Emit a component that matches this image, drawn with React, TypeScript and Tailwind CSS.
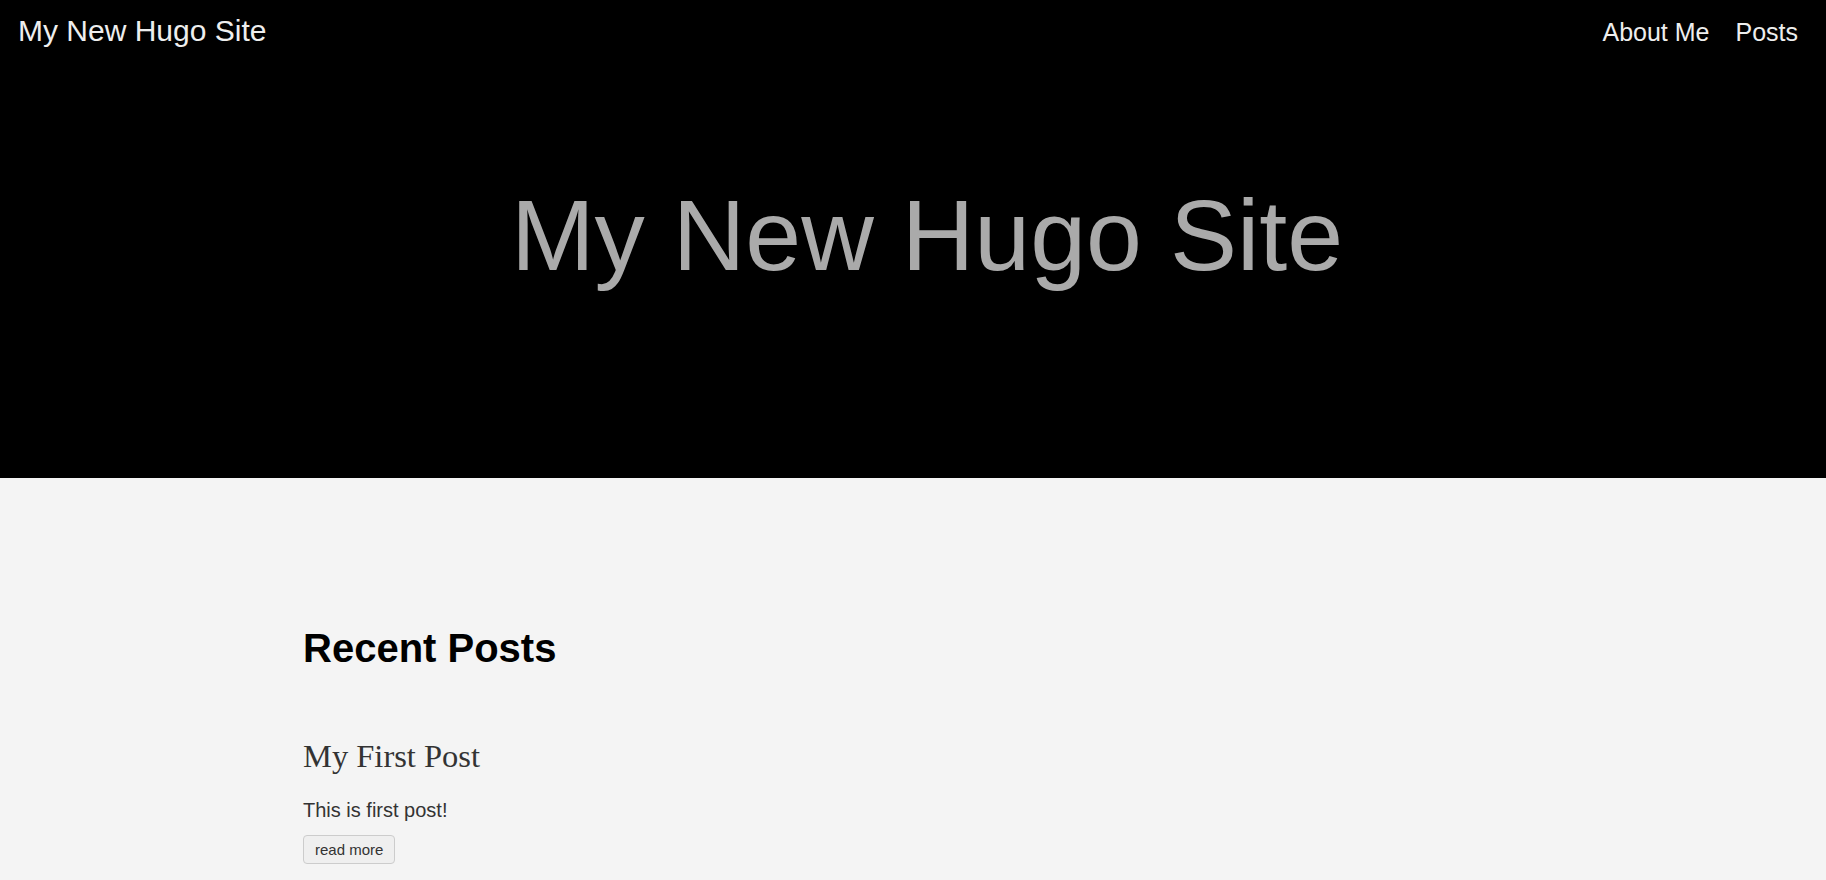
import React from "react";

export default function App() {
  const sans = { fontFamily: '"Liberation Sans", Arial, sans-serif' };
  return (
    <div className="min-h-[880px] bg-[#f4f4f4]" style={sans}>
      <header className="h-[478px] bg-black flex flex-col">
        <nav className="flex items-baseline justify-between pt-[16px] pl-[18px] pr-[28px]">
          <a className="text-[30px] leading-[30px] text-[#eeeeee]">My New Hugo Site</a>
          <div className="flex items-baseline gap-[26px]">
            <a className="text-[25px] leading-[25px] text-[#eeeeee]">About Me</a>
            <a className="text-[25px] leading-[25px] text-[#eeeeee]">Posts</a>
          </div>
        </nav>
        <h1 className="mt-[139px] pl-[28px] text-center text-[100.5px] leading-[100px] text-[#aaaaaa]">
          My New Hugo Site
        </h1>
      </header>
      <main className="w-[1220px] mx-auto pt-[150px]">
        <h2 className="text-[40px] leading-[40px] font-bold text-black">Recent Posts</h2>
        <h3
          className="mt-[72px] text-[32.5px] leading-[32px] text-[#333333]"
          style={{ fontFamily: '"Liberation Serif", Georgia, serif' }}
        >
          My First Post
        </h3>
        <p className="mt-[28px] text-[20px] leading-[20px] text-[#333333]">This is first post!</p>
        <button className="mt-[15px] h-[29px] px-[11px] flex items-center rounded-[4px] border border-[#cccccc] bg-[#efefef] text-[15px] leading-[15px] text-[#333333]">
          read more
        </button>
      </main>
    </div>
  );
}
